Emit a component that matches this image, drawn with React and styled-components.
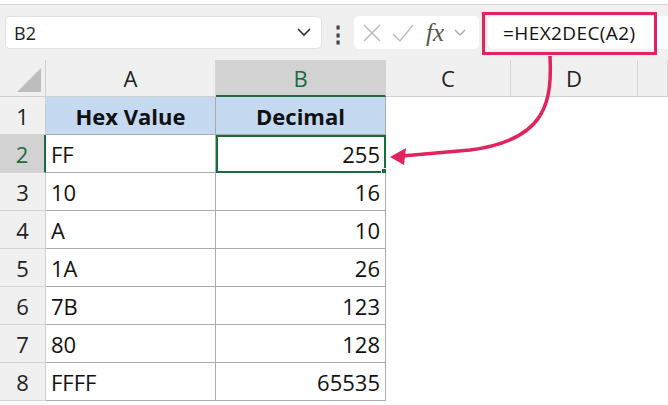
import React from "react";
import styled, { createGlobalStyle } from "styled-components";

const G = createGlobalStyle`
  body{margin:0;font-family:"Open Sans","Noto Sans",sans-serif;background:#fff;}
`;
const Page = styled.div`width:668px;height:405px;overflow:hidden;position:relative;background:#fff;`;
const TopStrip = styled.div`height:4px;background:#fff;border-bottom:1px solid #d4d4d4;box-shadow:0 1px 2px rgba(0,0,0,.08);`;
const Bar = styled.div`height:55px;background:#f0f0f0;display:flex;align-items:center;padding:0 0 0 5px;box-sizing:border-box;`;
const NameBox = styled.div`width:317px;height:33px;background:#fff;border-radius:5px;border:1px solid #e2e2e2;box-sizing:border-box;display:flex;align-items:center;justify-content:space-between;padding:0 10px 0 8px;font-size:18px;color:#222;`;
const Dots = styled.div`width:32px;display:flex;justify-content:center;font-size:22px;font-weight:bold;color:#444;`;
const FxBox = styled.div`width:125px;height:33px;background:#fff;border-radius:5px;box-sizing:border-box;display:flex;align-items:center;gap:10px;padding:0 8px;color:#bbb;`;
const Fx = styled.span`font-family:"Liberation Serif",serif;font-style:italic;font-size:25px;color:#555;margin-left:2px;line-height:1;`;
const Formula = styled.div`margin-left:9px;flex:1;height:33px;background:#fff;border-radius:5px 0 0 5px;display:flex;align-items:center;padding-left:15px;font-size:19px;letter-spacing:0.4px;color:#111;`;
const RedBox = styled.div`position:absolute;left:482px;top:12px;width:175px;height:43px;border:3px solid #e0245e;box-sizing:border-box;`;
const Grid = styled.div`display:grid;grid-template-columns:46px 170px 170px 125px 127px 30px;grid-template-rows:37px repeat(8,38px);`;
const Corner = styled.div`background:#f0f0f0;border-right:1px solid #cfcfcf;border-bottom:1px solid #cfcfcf;position:relative;
  &::after{content:"";position:absolute;right:4px;bottom:4px;border-style:solid;border-width:0 0 24px 24px;border-color:transparent transparent #bdbdbd transparent;}`;
const ColH = styled.div`background:${p=>p.sel?"#d2d2d2":"#f0f0f0"};color:${p=>p.sel?"#1d6b3c":"#222"};border-right:1px solid #d4d4d4;border-bottom:${p=>p.sel?"2px solid #1d6b3c":"1px solid #cfcfcf"};display:flex;align-items:center;justify-content:center;font-size:22px;box-sizing:border-box;`;
const RowH = styled.div`background:${p=>p.sel?"#d2d2d2":"#f0f0f0"};color:${p=>p.sel?"#1d6b3c":"#222"};border-right:${p=>p.sel?"2px solid #1d6b3c":"1px solid #cfcfcf"};border-bottom:1px solid #d4d4d4;display:flex;align-items:center;justify-content:center;font-size:22px;box-sizing:border-box;`;
const Cell = styled.div`box-sizing:border-box;border-right:1px solid ${p=>p.empty?"#fff":"#ababab"};border-bottom:1px solid ${p=>p.empty?"#fff":"#ababab"};background:${p=>p.head?"#c5d9f1":"#fff"};display:flex;align-items:center;justify-content:${p=>p.head?"center":p.right?"flex-end":"flex-start"};padding:0 5px 0 5px;font-size:22px;font-weight:${p=>p.head?700:400};color:#111;position:relative;
  ${p=>p.active&&`outline:2px solid #1d6b3c;outline-offset:-2px;&::after{content:"";position:absolute;right:-4px;bottom:-4px;width:6px;height:6px;background:#1d6b3c;border:1px solid #fff;}`}`;

const data=[["FF","255"],["10","16"],["A","10"],["1A","26"],["7B","123"],["80","128"],["FFFF","65535"]];

export default function App(){
  return (<Page><G/>
    <TopStrip/>
    <Bar>
      <NameBox><span>B2</span>
        <svg width="14" height="9" viewBox="0 0 14 9"><path d="M1 1l6 6 6-6" stroke="#333" strokeWidth="1.6" fill="none"/></svg>
      </NameBox>
      <Dots>⋮</Dots>
      <FxBox>
        <svg width="20" height="20" viewBox="0 0 20 20"><path d="M2 2l16 16M18 2L2 18" stroke="#bbb" strokeWidth="1.5"/></svg>
        <svg width="22" height="20" viewBox="0 0 22 20"><path d="M1 11l7 7L21 2" stroke="#bbb" strokeWidth="1.5" fill="none"/></svg>
        <Fx>fx</Fx>
        <svg width="12" height="8" viewBox="0 0 12 8"><path d="M1 1l5 5 5-5" stroke="#aaa" strokeWidth="1.4" fill="none"/></svg>
      </FxBox>
      <Formula>=HEX2DEC(A2)</Formula>
    </Bar>
    <Grid>
      <Corner/>
      <ColH>A</ColH><ColH sel>B</ColH><ColH>C</ColH><ColH>D</ColH><ColH/>
      <RowH>1</RowH><Cell head>Hex Value</Cell><Cell head>Decimal</Cell><Cell empty/><Cell empty/><Cell empty/>
      {data.map((r,i)=>(<React.Fragment key={i}>
        <RowH sel={i===0}>{i+2}</RowH>
        <Cell>{r[0]}</Cell>
        <Cell right active={i===0}>{r[1]}</Cell>
        <Cell empty/><Cell empty/><Cell empty/>
      </React.Fragment>))}
    </Grid>
    <RedBox/>
    <svg style={{position:"absolute",left:0,top:0}} width="668" height="405">
      <path d="M550 56 C 552 100 548 140 470 150 L 402 156" stroke="#e0245e" strokeWidth="3.5" fill="none"/>
      <path d="M390 157 L406 148 L404 165 Z" fill="#e0245e"/>
    </svg>
  </Page>);
}
